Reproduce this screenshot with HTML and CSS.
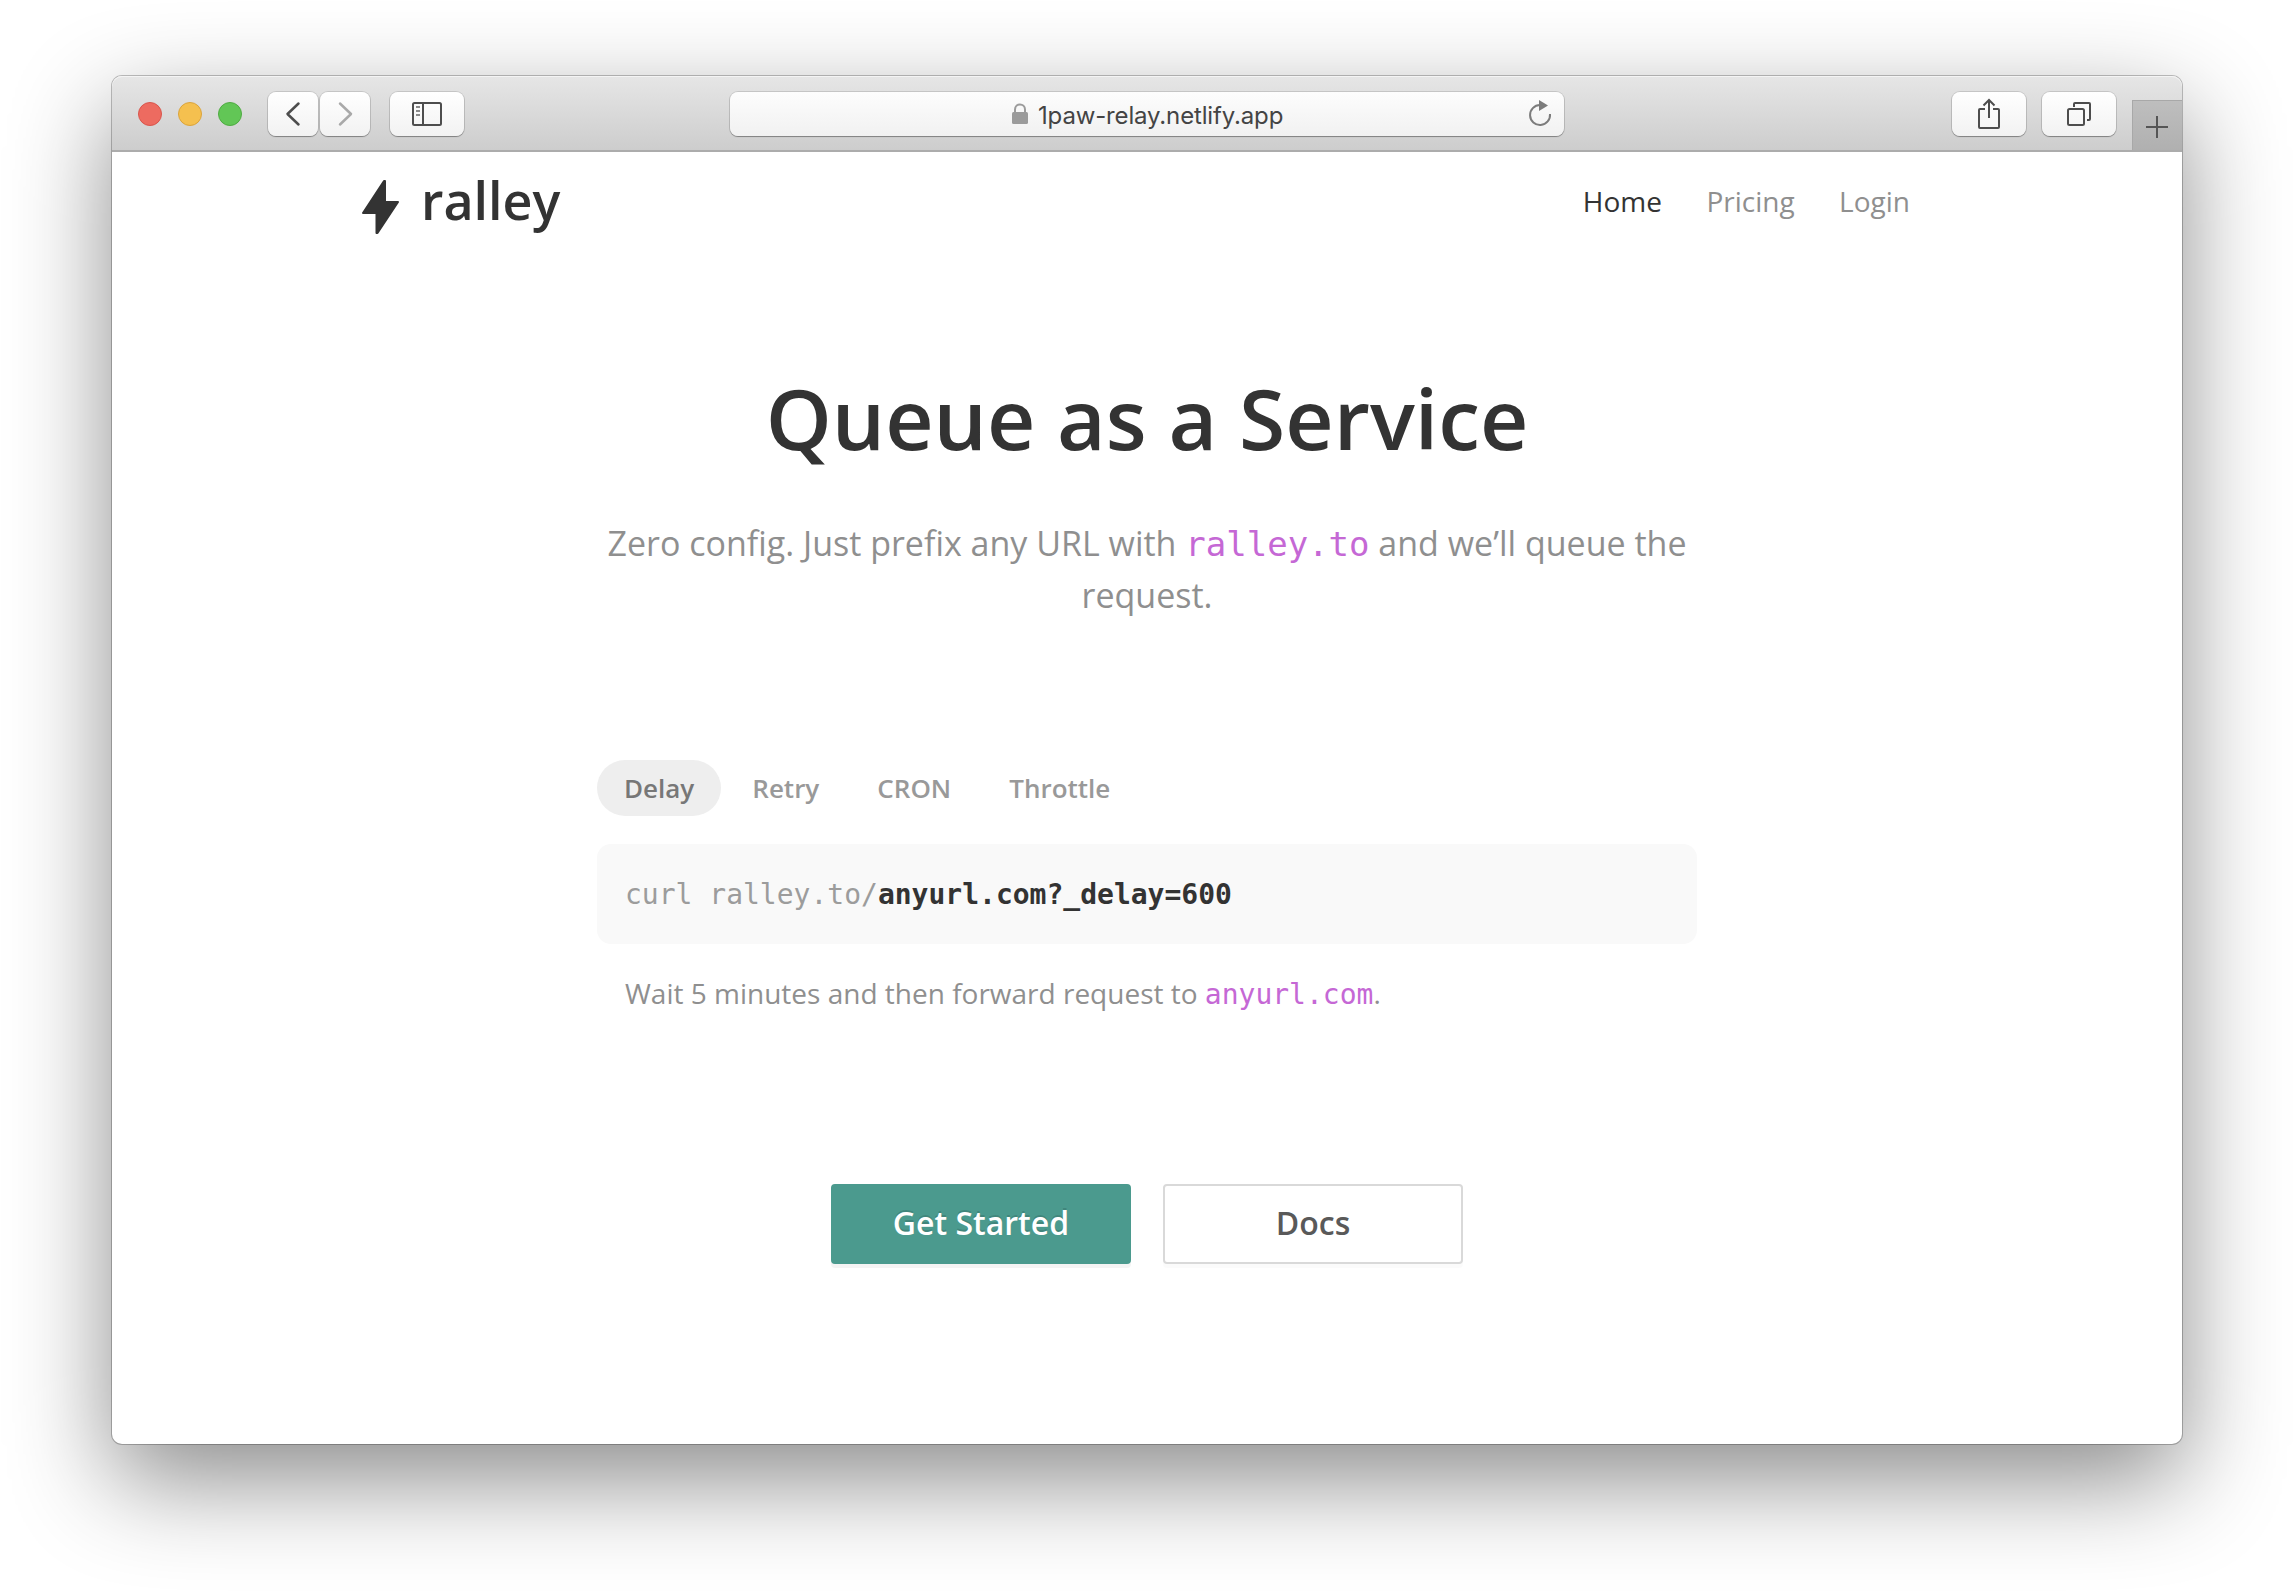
FILE: index.html
```html
<!DOCTYPE html>
<html lang="en">
<head>
<meta charset="utf-8">
<title>ralley</title>
<link rel="stylesheet" href="styles.css">
</head>
<body>
<div class="window">
  <div class="toolbar">
    <div class="lights"><i class="light red"></i><i class="light yellow"></i><i class="light green"></i></div>
    <div class="history">
      <div class="tool small"><svg width="50" height="44" viewBox="0 0 50 44" fill="none" stroke="#4d4d4d" stroke-width="2.5" stroke-linecap="round" stroke-linejoin="round"><path d="M30.500 11.500L19.500 22l11 10.500"/></svg></div>
      <div class="tool small"><svg width="50" height="44" viewBox="0 0 50 44" fill="none" stroke="#a9a9a9" stroke-width="2.5" stroke-linecap="round" stroke-linejoin="round"><path d="M20 11.500L31 22 20 32.500"/></svg></div>
    </div>
    <div class="tool sidebar"><svg width="74" height="44" viewBox="0 0 74 44" fill="none" stroke="#4d4d4d" stroke-width="2"><rect x="23" y="11" width="28" height="22" rx="1.500"/><path d="M33 11v22"/><path stroke="#8a8a8a" d="M26 15h4M26 19h4M26 23h4"/></svg></div>
    <div class="address">
      <svg class="lock" width="16" height="21" viewBox="0 0 16 21"><rect y="9" width="16" height="12" rx="1.500" fill="#9b9b9b"/><path d="M3 10V6.500C3 -.2 13 -.2 13 6.500V10" fill="none" stroke="#9b9b9b" stroke-width="2"/></svg>
      <span class="url">1paw-relay.netlify.app</span>
      <svg class="reload" width="24" height="28" viewBox="0 0 24 28"><path d="M12 6A10 10 0 1 0 22 15" fill="none" stroke="#7c7c7c" stroke-width="2"/><path d="M11 1l9 5.500-9 5.500z" fill="#7c7c7c"/></svg>
    </div>
    <div class="tool share"><svg width="74" height="44" viewBox="0 0 74 44" fill="none" stroke="#4d4d4d" stroke-width="2"><path d="M33 17h-5q-1 0-1 1v17q0 1 1 1h18q1 0 1-1V18q0-1-1-1h-5M37 26V8M31.500 13.500L37 8l5.500 5.500"/></svg></div>
    <div class="tool"><svg width="74" height="44" viewBox="0 0 74 44" fill="none" stroke="#4d4d4d" stroke-width="2"><rect x="26" y="17" width="16" height="16" rx="1.500"/><path d="M32 15v-3q0-1 1-1h14q1 0 1 1v15q0 1-1 1h-2"/></svg></div>
    <div class="newtab"><svg width="22" height="22" viewBox="0 0 22 22" stroke="#555" stroke-width="2"><path d="M0 11h22M11 0v22"/></svg></div>
  </div>
  <header class="header">
    <div class="brand">
      <svg width="38" height="56" viewBox="0 0 38 56" fill="#333" stroke="#333" stroke-width="2" stroke-linejoin="round"><path d="M22 2L1 34h13.500v20h1L36 23H23V2z"/></svg>
      <span>ralley</span>
    </div>
    <nav class="nav"><a class="current">Home</a><a>Pricing</a><a>Login</a></nav>
  </header>
  <main class="content">
    <h1>Queue as a Service</h1>
    <p class="intro">Zero config. Just prefix any URL with <code>ralley.to</code> and we’ll queue the request.</p>
    <div class="tabs"><a class="tab active">Delay</a><a class="tab">Retry</a><a class="tab">CRON</a><a class="tab">Throttle</a></div>
    <pre class="snippet">curl ralley.to/<b>anyurl.com?_delay=600</b></pre>
    <p class="note">Wait 5 minutes and then forward request to <code>anyurl.com</code>.</p>
    <div class="actions"><a class="button primary">Get Started</a><a class="button">Docs</a></div>
  </main>
</div>
</body>
</html>
```
FILE: styles.css
```css
* { box-sizing: border-box; }
body {
  margin: 0;
  height: 1592px;
  padding: 76px 112px 0;
  background: #fff;
  color: #333;
  font-family: "Open Sans", sans-serif;
  overflow: hidden;
}
svg { display: block; flex: none; }
.window {
  width: 2070px;
  height: 1368px;
  border-radius: 10px;
  background: #fff;
  box-shadow: 0 0 0 1px rgba(0, 0, 0, .24), 0 36px 100px rgba(0, 0, 0, .46);
}
.toolbar {
  display: flex;
  height: 76px;
  padding: 16px 0 0 26px;
  border-radius: 10px 10px 0 0;
  border-bottom: 2px solid #acacac;
  background: linear-gradient(#e6e6e6, #cdcdcd);
  box-shadow: inset 0 1px #f4f4f4;
}
.lights { display: flex; gap: 16px; padding-top: 10px; width: 130px; }
.light { width: 24px; height: 24px; border-radius: 50%; border: 1px solid; }
.red { background: #ed6b60; border-color: #d9554c; }
.yellow { background: #f5c04f; border-color: #dba43c; }
.green { background: #62c656; border-color: #4fab42; }
.history { display: flex; gap: 2px; width: 122px; }
.tool {
  width: 74px;
  height: 44px;
  border-radius: 8px;
  background: linear-gradient(#fff, #f2f2f2);
  box-shadow: 0 0 0 1px rgba(0, 0, 0, .12), 0 1px 1px rgba(0, 0, 0, .3);
  margin-right: 16px;
}
.tool.small { width: 50px; margin: 0; }
.tool.sidebar { margin-right: 266px; }
.tool.share { margin-left: 388px; }
.address {
  display: flex;
  width: 834px;
  height: 44px;
  padding: 0 12px 0 282px;
  border-radius: 8px;
  background: linear-gradient(#fdfdfd, #f1f1f1);
  box-shadow: 0 0 0 1px rgba(0, 0, 0, .12), 0 1px 1px rgba(0, 0, 0, .3);
}
.lock { margin-top: 11px; }
.url {
  margin-left: 10px;
  font: 24px/47px Inter, sans-serif;
  letter-spacing: -.15px;
  color: #444;
  white-space: nowrap;
}
.reload { margin: 7px 0 0 auto; }
.newtab {
  display: flex;
  align-items: center;
  justify-content: center;
  width: 50px;
  height: 50px;
  margin-top: 8px;
  padding: 2px 2px 0 0;
  border: solid #a8a8a8;
  border-width: 1px 0 0 1px;
  background: linear-gradient(#bebebe, #b0b0b0);
}
.header {
  display: flex;
  justify-content: space-between;
  align-items: center;
  height: 96px;
  padding: 0 272px 0 250px;
}
.brand { display: flex; gap: 21px; padding-top: 4px; font: 600 52px/60px "Open Sans", sans-serif; }
.brand svg { margin-top: 9px; }
.nav { display: flex; gap: 44.5px; font-size: 28px; line-height: 40px; color: #8f8f8f; padding-top: 2px; }
.nav .current { color: #333; }
.content { width: 1100px; margin: 0 auto; padding-top: 120px; }
h1 { margin: 0; font-size: 84px; line-height: 100px; font-weight: 600; text-align: center; }
.intro { margin: 49px 0 0; height: 104px; font-size: 34px; line-height: 52px; color: #8f8f8f; text-align: center; }
code { font-family: "DejaVu Sans Mono", monospace; line-height: 1; color: #c568d5; }
.tabs { display: flex; margin-top: 139px; gap: 4px; }
.tab { height: 56px; padding: 0 27px; border-radius: 28px; font-size: 26px; line-height: 56px; font-weight: 600; color: #999; }
.tab.active { background: #eee; color: #777; }
.snippet {
  margin: 28px 0 0;
  height: 100px;
  padding-left: 28px;
  border-radius: 14px;
  background: #f9f9f9;
  font: 28px/102px "DejaVu Sans Mono", monospace;
  color: #9c9c9c;
}
.snippet b { color: #333; }
.note { margin: 29px 0 0 28px; font-size: 28px; line-height: 40px; color: #8f8f8f; }
.actions { display: flex; justify-content: center; gap: 32px; margin-top: 171px; }
.button {
  width: 300px;
  height: 80px;
  border: 2px solid #d9d9d9;
  border-radius: 4px;
  font-size: 32px;
  line-height: 74px;
  font-weight: 600;
  text-align: center;
  color: #595959;
  box-shadow: 0 4px rgba(0, 0, 0, .015);
}
.button.primary { background: #4b9a8e; border-color: #4b9a8e; color: #fff; text-shadow: 0 -2px rgba(0, 0, 0, .12); box-shadow: 0 4px rgba(0, 0, 0, .045); }
```
